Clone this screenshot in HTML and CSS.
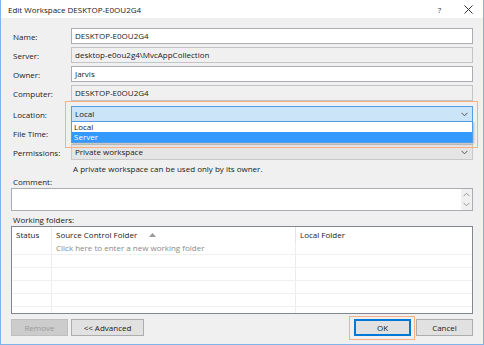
FILE: index.html
```html
<!DOCTYPE html>
<html>
<head>
<meta charset="utf-8">
<link rel="stylesheet" href="styles.css">
</head>
<body>
<div class="window">
  <div class="titlebar">
    <span class="title">Edit Workspace DESKTOP-E0OU2G4</span>
    <span class="tb-btn help">?</span>
    <span class="tb-btn close"><svg width="9" height="9" viewBox="0 0 9 9"><path d="M0.5 0.5 L8.5 8.5 M8.5 0.5 L0.5 8.5" stroke="#333" stroke-width="1" fill="none"/></svg></span>
  </div>
  <div class="content">
    <div class="form">
      <div class="row"><span class="lbl">Name:</span><div class="field edit">DESKTOP-E0OU2G4</div></div>
      <div class="row"><span class="lbl">Server:</span><div class="field ro">desktop-e0ou2g4\MvcAppCollection</div></div>
      <div class="row"><span class="lbl">Owner:</span><div class="field edit">Jarvis</div></div>
      <div class="row"><span class="lbl">Computer:</span><div class="field ro">DESKTOP-E0OU2G4</div></div>
      <div class="row r-loc"><span class="lbl">Location:</span>
        <div class="combo-wrap">
          <div class="field combo active">Local<svg class="chev" width="7" height="5" viewBox="0 0 7 5"><path d="M0.5 0.8 L3.5 3.8 L6.5 0.8" stroke="#555" fill="none"/></svg></div>
          <div class="popup">
            <div class="opt">Local</div>
            <div class="opt sel">Server</div>
          </div>
          <div class="focus-ring loc-ring"></div>
        </div>
      </div>
      <div class="row r-ft"><span class="lbl">File Time:</span><div class="field ro"></div></div>
      <div class="row r-perm"><span class="lbl">Permissions:</span><div class="field combo perm">Private workspace<svg class="chev" width="7" height="5" viewBox="0 0 7 5"><path d="M0.5 0.8 L3.5 3.8 L6.5 0.8" stroke="#555" fill="none"/></svg></div></div>
      <div class="hint">A private workspace can be used only by its owner.</div>
    </div>
    <div class="sect comment-lbl">Comment:</div>
    <div class="comment">
      <div class="scroll">
        <svg width="7" height="5" viewBox="0 0 7 5"><path d="M0.5 4.2 L3.5 1.2 L6.5 4.2" stroke="#999" fill="none"/></svg>
        <svg width="7" height="5" viewBox="0 0 7 5"><path d="M0.5 0.8 L3.5 3.8 L6.5 0.8" stroke="#999" fill="none"/></svg>
      </div>
    </div>
    <div class="sect wf-lbl">Working folders:</div>
    <div class="table">
      <div class="thead">
        <div class="c1">Status</div>
        <div class="c2">Source Control Folder <svg class="sort" width="7" height="4" viewBox="0 0 7 4"><path d="M0 4 L3.5 0 L7 4 Z" fill="#999"/></svg></div>
        <div class="c3">Local Folder</div>
      </div>
      <div class="trow first"><div class="c1"></div><div class="c2 ph">Click here to enter a new working folder</div><div class="c3"></div></div>
      <div class="trow"><div class="c1"></div><div class="c2"></div><div class="c3"></div></div>
      <div class="trow"><div class="c1"></div><div class="c2"></div><div class="c3"></div></div>
      <div class="trow"><div class="c1"></div><div class="c2"></div><div class="c3"></div></div>
      <div class="trow"><div class="c1"></div><div class="c2"></div><div class="c3"></div></div>
      <div class="trow last"><div class="c1"></div><div class="c2"></div><div class="c3"></div></div>
    </div>
    <div class="buttons">
      <div class="btn disabled">Remove</div>
      <div class="btn adv">&lt;&lt; Advanced</div>
      <div class="spacer"></div>
      <div class="ok-wrap"><div class="btn ok">OK</div><div class="focus-ring ok-ring"></div></div>
      <div class="btn">Cancel</div>
    </div>
  </div>
</div>
</body>
</html>
```
FILE: styles.css
```css
html, body {
  margin: 0;
  padding: 0;
}
body {
  width: 484px;
  height: 345px;
  overflow: hidden;
  font-family: "Open Sans", "Noto Sans", sans-serif;
  font-size: 8px;
  color: #1a1a1a;
  background: #fff;
}
.window {
  box-sizing: border-box;
  width: 484px;
  height: 345px;
  border: 1px solid #7eb4ea;
  border-top: none;
  background: #f0f0f0;
  display: flex;
  flex-direction: column;
}
.titlebar {
  height: 18px;
  background: #fff;
  display: flex;
  align-items: center;
  padding-left: 7px;
  flex: none;
}
.title {
  flex: 1;
  font-size: 8px;
  color: #1a1a1a;
}
.tb-btn {
  width: 29px;
  text-align: center;
  font-size: 8px;
  color: #333;
  display: flex;
  justify-content: center;
}
.content {
  padding: 10px 10px 0 10px;
  flex: 1;
  display: flex;
  flex-direction: column;
}
.form {
  display: flex;
  flex-direction: column;
  gap: 3px;
}
.row {
  display: flex;
  align-items: center;
  height: 16px;
}
.lbl {
  width: 58px;
  padding-left: 2px;
  flex: none;
  font-size: 8px;
}
.sect {
  padding-left: 2px;
  white-space: nowrap;
}
.field {
  box-sizing: border-box;
  flex: 1;
  height: 16px;
  border: 1px solid #abadb3;
  background: #fff;
  padding: 0 3px;
  line-height: 14px;
  white-space: nowrap;
  position: relative;
}
.field.ro {
  background: #f0f0f0;
  border-color: #c4c4c4;
}
.r-loc { margin-top: 2px; }
.combo-wrap {
  flex: 1;
  position: relative;
  height: 16px;
}
.combo.active {
  height: 16px;
  background: #cce4f7;
  border-color: #569de5;
}
.combo.perm {
  background: #e5e5e5;
  border-color: #c9c9c9;
}
.chev {
  position: absolute;
  right: 4px;
  top: 5px;
}
.popup {
  position: absolute;
  left: 0;
  right: 0;
  top: 15px;
  border: 1px solid #569de5;
  background: #fff;
  box-shadow: 1px 1px 2px rgba(0,0,0,0.25);
  z-index: 2;
}
.opt {
  height: 10px;
  line-height: 10px;
  padding-left: 2px;
}
.opt.sel {
  background: #3399ff;
  color: #fff;
}
.focus-ring {
  position: absolute;
  border: 1px solid #f7b084;
  pointer-events: none;
  z-index: 3;
}
.loc-ring {
  left: -6px;
  right: -5px;
  top: -5px;
  bottom: -26px;
}
.hint {
  padding-left: 62px;
  margin-top: 0;
  height: 12px;
  line-height: 12px;
}
.comment-lbl {
  margin-top: 1px;
  height: 12px;
  line-height: 12px;
}
.comment {
  box-sizing: border-box;
  height: 23px;
  border: 1px solid #abadb3;
  background: #fff;
  display: flex;
  justify-content: flex-end;
}
.scroll {
  width: 11px;
  background: #f0f0f0;
  display: flex;
  flex-direction: column;
  justify-content: space-between;
  align-items: center;
  padding: 3px 0;
  box-sizing: border-box;
}
.wf-lbl {
  margin-top: 3px;
  height: 12px;
  line-height: 12px;
}
.table {
  box-sizing: border-box;
  margin-top: 0;
  height: 88px;
  border: 1px solid #828790;
  background: #fff;
  display: flex;
  flex-direction: column;
}
.thead, .trow {
  display: flex;
}
.thead {
  height: 15px;
  line-height: 15px;
}
.c1 {
  width: 40px;
  padding-left: 4px;
  box-sizing: border-box;
  border-right: 1px solid #ececec;
  flex: none;
}
.c2 {
  width: 244px;
  padding-left: 4px;
  box-sizing: border-box;
  border-right: 1px solid #ececec;
  flex: none;
}
.thead .c2 { border-right: 1px solid #e3e3e3; }
.c3 {
  flex: 1;
  padding-left: 4px;
}
.sort {
  margin-left: 10px;
  vertical-align: 1px;
}
.trow {
  height: 12px;
  line-height: 12px;
  border-bottom: 1px solid #f0f0f0;
}
.trow.last { border-bottom: none; flex: 1; }
.ph { color: #8a8a8a; }
.buttons {
  display: flex;
  align-items: center;
  margin-top: 5px;
  gap: 3px;
}
.spacer { flex: 1; }
.btn {
  box-sizing: border-box;
  width: 57px;
  height: 17px;
  line-height: 15px;
  text-align: center;
  background: #e1e1e1;
  border: 1px solid #adadad;
}
.btn.adv { width: 73px; }
.btn.disabled {
  background: #cccccc;
  border-color: #bfbfbf;
  color: #9a9a9a;
}
.ok-wrap {
  position: relative;
  margin-right: 2px;
}
.btn.ok {
  border: 2px solid #0078d7;
  line-height: 13px;
}
.ok-ring {
  left: -5px;
  right: -4px;
  top: -3px;
  bottom: -4px;
}
```
